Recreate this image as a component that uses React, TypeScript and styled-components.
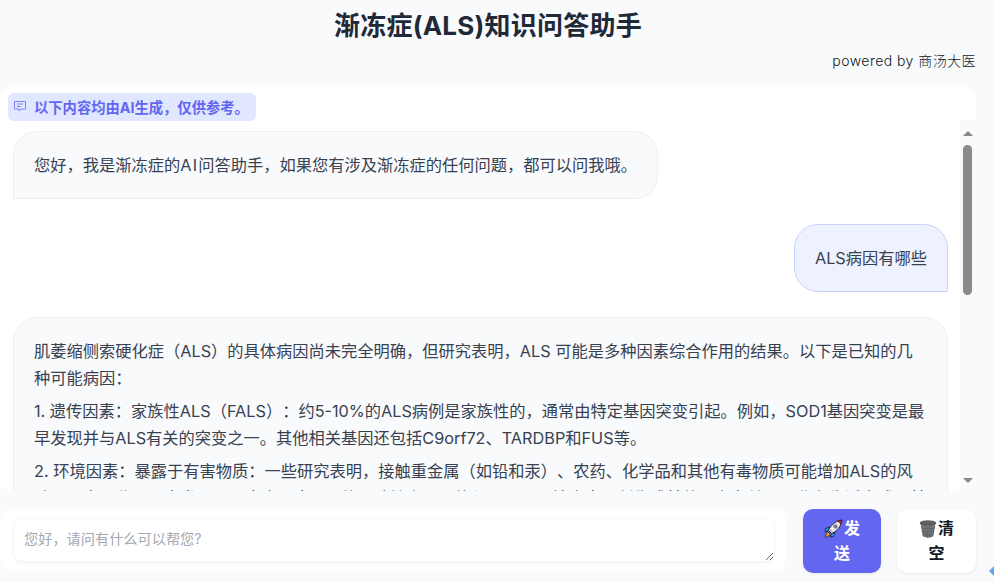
import React from "react";
import styled, { createGlobalStyle } from "styled-components";

const Global = createGlobalStyle`
  html, body { margin: 0; padding: 0; background: #f9fafb; }
  body { font-family: Inter, "Noto Sans CJK SC", sans-serif; width: 994px; height: 582px; overflow: hidden; text-spacing-trim: space-all; }
  * { box-sizing: border-box; }
`;

const Page = styled.div`
  width: 976px;
  height: 582px;
  display: flex;
  flex-direction: column;
`;
const Title = styled.h1`
  margin: 0;
  padding-top: 9px;
  height: 50px;
  font-size: 26px;
  line-height: 34px;
  font-weight: 700;
  letter-spacing: 0.25px;
  color: #1f2937;
  text-align: center;
`;
const Powered = styled.div`
  height: 37px;
  padding-top: 2px;
  text-align: right;
  font-size: 14px;
  line-height: 18px;
  letter-spacing: 0.45px;
  font-weight: 300;
  color: #111827;
`;
const ChatPanel = styled.section`
  position: relative;
  height: 404px;
  background: #ffffff;
  border-radius: 10px 10px 0 10px;
  display: flex;
  overflow: hidden;
`;
const Messages = styled.div`
  flex: 1;
  min-width: 0;
  overflow: hidden;
  padding: 6px 0 0 8px;
`;
const Notice = styled.div`
  display: inline-flex;
  align-items: center;
  gap: 7px;
  height: 28px;
  width: 248px;
  padding: 0 5px 2px;
  border-radius: 6px;
  background: #e0e7ff;
  color: #6366f1;
  font-size: 14.3px;
  font-weight: 700;
  white-space: nowrap;
  svg { flex: none; }
`;
const Thread = styled.div`
  margin: 10px 0 0 5px;
  display: flex;
  flex-direction: column;
  gap: 25px;
`;
const Bubble = styled.div<{ $user?: boolean; $wide?: boolean }>`
  align-self: ${(p) => (p.$user ? "flex-end" : "flex-start")};
  width: ${(p) => (p.$wide ? "100%" : "auto")};
  padding: 20px;
  border: 1px solid ${(p) => (p.$user ? "#c7d2fe" : "#eceef1")};
  background: ${(p) => (p.$user ? "#eef2ff" : "#f9fafb")};
  border-radius: ${(p) => (p.$user ? "24px 24px 0 24px" : "24px 24px 24px 0")};
  color: #374151;
  font-size: 16.25px;
  line-height: 26px;
  font-weight: 400;
  p { margin: 0 0 6px; line-height: 27px; }
`;
const Latin = styled.span`
  letter-spacing: 1.2px;
`;
const ScrollRail = styled.div`
  flex: none;
  width: 28px;
  margin-top: 33px;
  padding-right: 3px;
  display: flex;
  flex-direction: column;
  align-items: flex-end;
  background: linear-gradient(to right, #ffffff 12px, #f9fafb 12px);
`;
const ArrowUp = styled.span`
  width: 0;
  height: 0;
  margin: 11px 0 9px;
  border-left: 5px solid transparent;
  border-right: 5px solid transparent;
  border-bottom: 5px solid #8a8a8a;
`;
const ArrowDown = styled(ArrowUp)`
  margin: auto 0 8px;
  border-bottom: 0;
  border-top: 5px solid #8a8a8a;
`;
const Thumb = styled.span`
  width: 9px;
  height: 150px;
  margin-right: 1px;
  border-radius: 5px;
  background: #8a8a8a;
`;
const Composer = styled.div`
  margin-top: 18px;
  display: flex;
  gap: 16px;
  align-items: flex-start;
`;
const InputCard = styled.div`
  flex: none;
  width: 786px;
  height: 62px;
  margin-right: 1px;
  padding: 10px 12px 10px 14px;
  background: #ffffff;
  border-radius: 12px;
`;
const Input = styled.textarea`
  display: block;
  width: 100%;
  height: 42px;
  min-height: 42px;
  padding: 10px 10px 8px;
  border: 0;
  outline: 0;
  border-radius: 8px;
  background: #ffffff;
  box-shadow: 0 1px 4px rgba(0, 0, 0, 0.08);
  font: 400 14.2px/20px Inter, "Noto Sans CJK SC", sans-serif;
  color: #374151;
  &::placeholder { color: #a3a8b3; opacity: 1; }
`;
const Action = styled.button<{ $primary?: boolean }>`
  flex: none;
  width: ${(p) => (p.$primary ? "78px" : "79px")};
  height: 64px;
  padding: 0 15px;
  border: 0;
  border-radius: 10px;
  background: ${(p) => (p.$primary ? "#6366f1" : "#ffffff")};
  color: ${(p) => (p.$primary ? "#ffffff" : "#111827")};
  box-shadow: 0 1px 3px rgba(0, 0, 0, 0.08);
  font: 700 16px/25px Inter, "Noto Sans CJK SC", sans-serif;
  text-align: center;
  svg { vertical-align: -4px; margin-right: 1px; }
`;
const Corner = styled.svg`
  position: fixed;
  right: 0;
  bottom: 6px;
`;

const CommentIcon = () => (
  <svg width="14" height="14" viewBox="0 0 14 14" fill="none" stroke="#7c83f5" strokeWidth="1">
    <path d="M1.500 2.500h11v7.500H8l-2 2v-2H1.500z" />
    <path d="M4 5h6M4 7.500h4" />
  </svg>
);
const Rocket = () => (
  <svg width="19" height="19" viewBox="0 0 19 19">
    <path d="M5.500 8L1.500 9.500 1 13l3.500-1.500z" fill="#2f9be0" stroke="#111" strokeWidth="0.7" />
    <path d="M11 13.500L9.500 17.500 6 18l1.500-3.500z" fill="#2f9be0" stroke="#111" strokeWidth="0.7" />
    <path d="M3.500 12.500L6.500 15.500 2 18.500 1 18z" fill="#f08a1d" stroke="#111" strokeWidth="0.6" />
    <path d="M3.800 14l1.200 1.200-2.300 1.500z" fill="#f5d020" />
    <path d="M4.500 11.500C6.500 6.500 11.500 2 18 1c-.8 6.500-5.500 11.500-10.500 13.500z" fill="#eeeef2" stroke="#111" strokeWidth="0.8" />
    <path d="M13.500 2.200c1.400.6 2.500 1.700 3.300 3.200L18 1z" fill="#d81e2c" stroke="#111" strokeWidth="0.5" />
    <path d="M5.500 11.500l2.200 2.200 1.500-.8-2.900-2.900z" fill="#a9adb6" />
    <circle cx="11.500" cy="7.500" r="1.800" fill="#7f8794" stroke="#444" strokeWidth="0.5" />
  </svg>
);
const Trash = () => (
  <svg width="18" height="18" viewBox="0 0 18 18">
    <path d="M1.500 3.500L3.600 16c1 1.900 9.800 1.900 10.800 0L16.500 3.500z" fill="#7d8184" />
    <path
      d="M3 6l2.500 11M5.500 6l1.500 11.500M8 6l.500 12M10.500 6l-.500 12M13 6l-1.500 11.500M15.500 6l-2.500 11M2.500 8c4 1.300 9 1.300 13 0M3 11c4 1.300 8 1.300 12 0M3.500 14c3.500 1.300 7.500 1.300 11 0"
      stroke="#4f5356"
      strokeWidth="0.6"
      fill="none"
    />
    <ellipse cx="9" cy="3" rx="8" ry="2.300" fill="#5f6366" stroke="#3f4245" strokeWidth="0.6" />
  </svg>
);

export default function App() {
  return (
    <Page>
      <Global />
      <Title>渐冻症(ALS)知识问答助手</Title>
      <Powered>powered by 商汤大医</Powered>
      <ChatPanel>
        <Messages>
          <Notice>
            <CommentIcon />
            以下内容均由AI生成，仅供参考。
          </Notice>
          <Thread>
            <Bubble>您好，我是渐冻症的<Latin>AI</Latin>问答助手，如果您有涉及渐冻症的任何问题，都可以问我哦。</Bubble>
            <Bubble $user>ALS病因有哪些</Bubble>
            <Bubble $wide>
              <p>肌萎缩侧索硬化症（ALS）的具体病因尚未完全明确，但研究表明，ALS 可能是多种因素综合作用的结果。以下是已知的几种可能病因：</p>
              <p>1. 遗传因素：家族性ALS（FALS）：约5-10%的ALS病例是家族性的，通常由特定基因突变引起。例如，SOD1基因突变是最早发现并与ALS有关的突变之一。其他相关基因还包括C9orf72、TARDBP和FUS等。</p>
              <p>2. 环境因素：暴露于有害物质：一些研究表明，接触重金属（如铅和汞）、农药、化学品和其他有毒物质可能增加ALS的风险。因素职业，研究发现，因素人员患ALS的风险较高，可能与暴露于环境毒素、创伤或其他压力有关。职业和生活方式，其</p>
            </Bubble>
          </Thread>
        </Messages>
        <ScrollRail>
          <ArrowUp />
          <Thumb />
          <ArrowDown />
        </ScrollRail>
      </ChatPanel>
      <Composer>
        <InputCard>
          <Input placeholder="您好，请问有什么可以帮您?" />
        </InputCard>
        <Action $primary>
          <Rocket />发送
        </Action>
        <Action>
          <Trash />清空
        </Action>
      </Composer>
      <Corner width="5" height="10" viewBox="0 0 5 10">
        <path d="M5 0L0 5l5 5z" fill="#60a5fa" />
      </Corner>
    </Page>
  );
}
